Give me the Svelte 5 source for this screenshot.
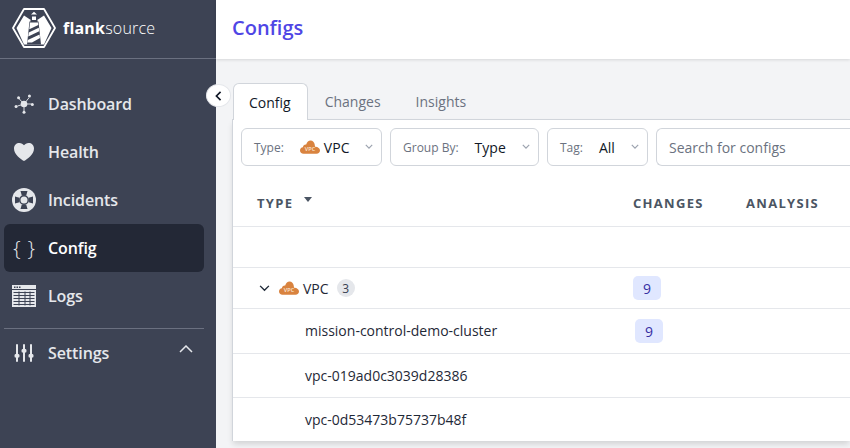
<script lang="ts">
	const navItems = [
		{ id: 'dashboard', label: 'Dashboard' },
		{ id: 'health', label: 'Health' },
		{ id: 'incidents', label: 'Incidents' },
		{ id: 'config', label: 'Config', active: true },
		{ id: 'logs', label: 'Logs' }
	];

	const tabs = ['Config', 'Changes', 'Insights'];

	const children = [
		{ name: 'mission-control-demo-cluster', changes: 9, height: 'tall' },
		{ name: 'vpc-019ad0c3039d28386', height: 'mid' },
		{ name: 'vpc-0d53473b75737b48f', height: 'last' }
	];
</script>

{#snippet vpcIcon()}
	<svg class="vpc-icon" viewBox="0 0 20 14" width="20" height="14">
		<path
			d="M3.500 13.800C1.400 13.800 0 12.400 0 10.500 0 8.800 1.200 7.500 2.900 7.300 3 5.500 4.500 4.300 6.200 4.500 7 2 8.600.6 10.500.6c2.300 0 3.900 1.800 4.200 4 .2 1 .2 1.800.4 2.200 2.700-.2 4.900 1.600 4.900 3.800 0 1.900-1.500 3.200-3.500 3.200z"
			fill="#d9833f"
		/>
		<text x="10" y="11" text-anchor="middle" class="vpc-text">VPC</text>
	</svg>
{/snippet}

{#snippet chevron()}
	<svg class="select-chevron" viewBox="0 0 10 6" width="8" height="5">
		<path d="M1 1l4 4 4-4" fill="none" stroke="#9ca3af" stroke-width="1.500" />
	</svg>
{/snippet}

<div class="shell">
	<aside class="sidebar">
		<div class="brand">
			<svg viewBox="0 0 44 40" width="44" height="40">
				<path d="M12 1h20l11 19-11 19H12L1 20z" fill="none" stroke="#fff" stroke-width="1.800" stroke-linejoin="round" />
				<!-- white ground behind the tower, with the beams cut out above it -->
				<path d="M4.500 20L12 7.500l6 4h8l6-4L39.500 20 32 36.500H12z" fill="#fff" />
				<!-- tower silhouette -->
				<path d="M18.500 6.500h7v7h1l2.500 23H15l2.500-23h1z" fill="#3d4354" />
				<!-- lantern roof and stripes -->
				<path d="M19 6.500L22 3.800l3 2.700zM20 8.500h4v3.500h-4zM18 14.500h8l.3 2.500-9 4.300zM16.800 24.500l10-4.700.4 3.500-11 5.200zM15.800 32l11.800-5.500.4 3.600-8 4.300h-4.700z" fill="#fff" />
			</svg>
			<span class="wordmark"><b>flank</b>source</span>
		</div>

		<nav class="nav">
			{#each navItems as item}
				<a class="nav-item" class:active={item.active} href="#{item.id}">
					<span class="nav-icon">
						{#if item.id === 'dashboard'}
							<svg viewBox="0 0 24 24" width="20" height="20" fill="#e5e7eb" stroke="#e5e7eb">
								<path d="M12 12L5.500 5M12 12l6-7.500M12 12h9M12 12l-8 2.500M12 12v9" stroke-width="1.100" />
								<circle cx="12" cy="12" r="4" stroke="none" />
								<circle cx="5.500" cy="4.500" r="1.800" stroke="none" />
								<circle cx="18.500" cy="2.500" r="1.800" stroke="none" />
								<circle cx="22" cy="12.500" r="1.800" stroke="none" />
								<circle cx="2.500" cy="15" r="1.800" stroke="none" />
								<circle cx="12" cy="22" r="1.800" stroke="none" />
							</svg>
						{:else if item.id === 'health'}
							<svg viewBox="0 0 24 24" width="24" height="24">
								<path d="M12 21C8.500 19 2 14.500 2 8.500 2 5 4.500 3 7.400 3 9.400 3 11 4 12 5.300 13 4 14.600 3 16.600 3 19.500 3 22 5 22 8.500c0 6-6.500 10.500-10 12.500z" fill="#e5e7eb" />
							</svg>
						{:else if item.id === 'incidents'}
							<svg viewBox="0 0 24 24" width="24" height="24">
								<circle cx="12" cy="12" r="12" fill="#e5e7eb" />
								<circle cx="12" cy="12" r="4.200" fill="#e5e7eb" stroke="#3d4354" stroke-width="1.400" />
								<path d="M8.500 3h7l-1.300 4.500H9.800zM8.500 21h7l-1.300-4.500H9.800zM3 8.500v7l4.500-1.300V9.800zM21 8.500v7l-4.500-1.300V9.800z" fill="#3d4354" />
							</svg>
						{:else if item.id === 'config'}
							<span class="braces">&#123;<i></i>&#125;</span>
						{:else if item.id === 'logs'}
							<svg viewBox="0 0 24 22" width="24" height="22">
								<path d="M0 0h24v22H0z" fill="#e5e7eb" />
								<path d="M2 1.500h1.500V3H2zM4.500 1.500H6V3H4.500zM7 1.500h1.500V3H7z" fill="#3d4354" />
								<path d="M0 4.500h24M1.500 7.500h21M1.500 10.500h21M1.500 13.500h21M1.500 16.500h21M1.500 19.500h21M7 6.500v14M13 6.500v14M18 6.500v14" stroke="#3d4354" stroke-width="1" fill="none" />
							</svg>
						{/if}
					</span>
					<span>{item.label}</span>
				</a>
			{/each}
		</nav>

		<div class="nav-section">
			<div class="nav-item">
				<span class="nav-icon">
					<svg viewBox="0 0 24 24" width="24" height="24" stroke="#e5e7eb" fill="#e5e7eb" stroke-linecap="round">
						<path d="M5 4v16M12 4v16M19 4v16" stroke-width="2" />
						<rect x="2.600" y="13" width="4.800" height="3.600" rx="1.200" stroke="none" />
						<rect x="9.600" y="8" width="4.800" height="3.600" rx="1.200" stroke="none" />
						<rect x="16.600" y="13" width="4.800" height="3.600" rx="1.200" stroke="none" />
					</svg>
				</span>
				<span>Settings</span>
				<svg class="collapse" viewBox="0 0 14 8" width="14" height="8">
					<path d="M1 7l6-6 6 6" fill="none" stroke="#e5e7eb" stroke-width="1.500" />
				</svg>
			</div>
		</div>
	</aside>

	<main class="main">
		<button class="sidebar-toggle" aria-label="Collapse sidebar">
			<svg viewBox="0 0 8 12" width="7" height="10">
				<path d="M6.500 1L1.500 6l5 5" fill="none" stroke="#111827" stroke-width="2" />
			</svg>
		</button>

		<header class="topbar">
			<h1>Configs</h1>
		</header>

		<div class="content">
			<div class="tabs">
				{#each tabs as tab, i}
					<span class="tab" class:selected={i === 0}>{tab}</span>
				{/each}
			</div>

			<section class="panel">
				<div class="filters">
					<div class="select type-select">
						<span class="select-label">Type:</span>
						{@render vpcIcon()}
						<span class="select-value">VPC</span>
						{@render chevron()}
					</div>
					<div class="select group-select">
						<span class="select-label">Group By:</span>
						<span class="select-value">Type</span>
						{@render chevron()}
					</div>
					<div class="select tag-select">
						<span class="select-label">Tag:</span>
						<span class="select-value">All</span>
						{@render chevron()}
					</div>
					<input class="search" placeholder="Search for configs" />
				</div>

				<div class="table">
					<div class="row head">
						<div class="col-name">
							TYPE
							<svg viewBox="0 0 8 5" width="8" height="5" class="sort"><path d="M0 0h8L4 5z" fill="#4b5563" /></svg>
						</div>
						<div class="col-changes">CHANGES</div>
						<div class="col-analysis">ANALYSIS</div>
					</div>
					<div class="row spacer"></div>
					<div class="row group">
						<div class="col-name">
							<svg class="expander" viewBox="0 0 12 8" width="11" height="7">
								<path d="M1 1l5 5 5-5" fill="none" stroke="#1f2937" stroke-width="1.600" />
							</svg>
							{@render vpcIcon()}
							<span>VPC</span>
							<span class="count">3</span>
						</div>
						<div class="col-changes"><span class="pill">9</span></div>
					</div>
					{#each children as child}
						<div class="row child {child.height}">
							<div class="col-name">{child.name}</div>
							<div class="col-changes">
								{#if child.changes}<span class="pill nudge">{child.changes}</span>{/if}
							</div>
						</div>
					{/each}
				</div>
			</section>
		</div>
	</main>
</div>

<style>
	:global(body) {
		margin: 0;
		overflow: hidden;
		font-family: 'Open Sans', 'Noto Sans', sans-serif;
	}
	.shell {
		display: flex;
		width: 850px;
		height: 448px;
		overflow: hidden;
		background: #f3f4f6;
	}
	.sidebar {
		flex: 0 0 216px;
		background: #3d4354;
		color: #e5e7eb;
		box-sizing: border-box;
		padding: 0 12px 0 4px;
	}
	.brand {
		display: flex;
		align-items: center;
		gap: 7px;
		height: 59px;
		margin: 0 -12px 0 -4px;
		padding: 0 0 3px 12px;
		box-sizing: border-box;
		border-bottom: 1px solid #6b7080;
	}
	.wordmark {
		font-size: 16px;
		font-weight: 300;
		color: #fff;
		letter-spacing: 0.2px;
	}
	.wordmark b {
		font-weight: 700;
	}
	.nav {
		display: flex;
		flex-direction: column;
		gap: 0;
		padding-top: 21px;
	}
	.nav-item {
		display: flex;
		align-items: center;
		height: 48px;
		padding-left: 8px;
		color: #e5e7eb;
		font-size: 16px;
		font-weight: 600;
		letter-spacing: -0.1px;
		text-decoration: none;
		border-radius: 6px;
	}
	.nav-item.active {
		background: #232836;
		color: #fff;
	}
	.nav-icon {
		flex: 0 0 24px;
		height: 24px;
		margin-right: 12px;
		display: flex;
		align-items: center;
		justify-content: center;
	}
	.braces {
		display: flex;
		align-items: center;
		font-size: 21px;
		font-weight: 300;
		color: #e5e7eb;
	}
	.braces i {
		width: 7px;
	}
	.nav-section {
		margin-top: 8px;
		border-top: 1px solid #6b7080;
	}
	.nav-section .nav-item {
		position: relative;
		padding-right: 11px;
	}
	.collapse {
		margin-left: auto;
		margin-top: -8px;
	}
	.main {
		position: relative;
		flex: 1;
		min-width: 0;
		display: flex;
		flex-direction: column;
	}
	.sidebar-toggle {
		position: absolute;
		left: -10px;
		top: 84px;
		width: 25px;
		height: 23px;
		padding: 0;
		border: 1px solid #e5e7eb;
		border-radius: 50%;
		background: #fff;
		display: flex;
		align-items: center;
		justify-content: center;
		z-index: 2;
	}
	.topbar {
		height: 59px;
		flex: 0 0 59px;
		box-sizing: border-box;
		background: #fff;
		box-shadow: 0 1px 3px rgba(0, 0, 0, 0.12);
		padding-left: 16px;
		display: flex;
		align-items: center;
	}
	h1 {
		margin: 0 0 5px;
		font-size: 20px;
		font-weight: 600;
		color: #4f46e5;
	}
	.content {
		padding: 24px 0 0 17px;
	}
	.tabs {
		display: flex;
		height: 36px;
		position: relative;
	}
	.tab {
		padding: 0 17px 0 16px;
		display: flex;
		align-items: center;
		font-size: 14px;
		color: #6b7280;
		border: 1px solid transparent;
		border-bottom: 0;
	}
	.tab.selected {
		background: #fff;
		color: #111827;
		border-color: #d1d5db;
		border-radius: 6px 6px 0 0;
		padding: 0 16px 0 15px;
		margin-bottom: -1px;
		position: relative;
		z-index: 1;
	}
	.panel {
		background: #fff;
		border-top: 1px solid #d1d5db;
		border-left: 1px solid #d1d5db;
		margin-left: -1px;
		box-shadow: 0 4px 6px -1px rgba(0, 0, 0, 0.14);
	}
	.filters {
		display: flex;
		gap: 8px;
		padding: 8px 0 0 8px;
		width: 640px;
	}
	.select {
		display: flex;
		align-items: center;
		height: 38px;
		box-sizing: border-box;
		border: 1px solid #d1d5db;
		border-radius: 6px;
		position: relative;
		font-size: 14px;
		color: #111827;
		flex: none;
		padding-left: 12px;
	}
	.select-label {
		font-size: 12px;
		color: #6b7280;
	}
	.select-chevron {
		position: absolute;
		right: 8px;
		top: 15px;
	}
	.type-select {
		width: 141px;
	}
	.type-select .vpc-icon {
		margin-left: 16px;
		margin-right: 4px;
	}
	.group-select {
		width: 149px;
	}
	.group-select .select-value {
		margin-left: 16px;
	}
	.tag-select {
		width: 101px;
	}
	.tag-select .select-value {
		margin-left: 16px;
	}
	.search {
		flex: none;
		width: 260px;
		height: 38px;
		box-sizing: border-box;
		border: 1px solid #d1d5db;
		border-right: 0;
		border-radius: 6px 0 0 6px;
		padding: 0 12px;
		font: inherit;
		font-size: 14px;
		outline: none;
	}
	.search::placeholder {
		color: #6b7280;
		opacity: 1;
	}
	.vpc-text {
		font-size: 5.500px;
		font-family: 'Open Sans', sans-serif;
		font-weight: 600;
		fill: #fbe9d7;
	}
	.table {
		margin-top: 14px;
	}
	.row {
		display: flex;
		align-items: center;
		box-sizing: border-box;
		border-bottom: 1px solid #e5e7eb;
		font-size: 14px;
		color: #1f2937;
	}
	.row .col-name {
		flex: 0 0 400px;
		display: flex;
		align-items: center;
		box-sizing: border-box;
		padding-left: 24px;
	}
	.col-changes {
		flex: 0 0 113px;
	}
	.head {
		height: 47px;
		font-size: 13px;
		font-weight: 700;
		letter-spacing: 1.300px;
		color: #4b5563;
	}
	.sort {
		margin: -7px 0 0 11px;
	}
	.spacer {
		height: 41px;
	}
	.group {
		height: 41px;
	}
	.group .col-name {
		padding-left: 26px;
	}
	.expander {
		margin-right: 9px;
	}
	.group .vpc-icon {
		margin-right: 4px;
	}
	.count {
		margin-left: 8px;
		min-width: 18px;
		height: 18px;
		border-radius: 50%;
		background: #e5e7eb;
		font-size: 12px;
		display: flex;
		align-items: center;
		justify-content: center;
		color: #374151;
	}
	.child .col-name {
		padding-left: 72px;
		font-size: 14px;
	}
	.tall {
		height: 45px;
	}
	.tall .col-name {
		margin-top: -1px;
	}
	.mid {
		height: 44px;
	}
	.last {
		height: 43px;
		border-bottom: 0;
	}
	.pill {
		display: inline-flex;
		align-items: center;
		justify-content: center;
		width: 28px;
		height: 24px;
		border-radius: 5px;
		background: #e0e7ff;
		color: #3730a3;
		font-size: 14px;
	}
	.pill.nudge {
		margin-left: 2px;
	}
</style>
